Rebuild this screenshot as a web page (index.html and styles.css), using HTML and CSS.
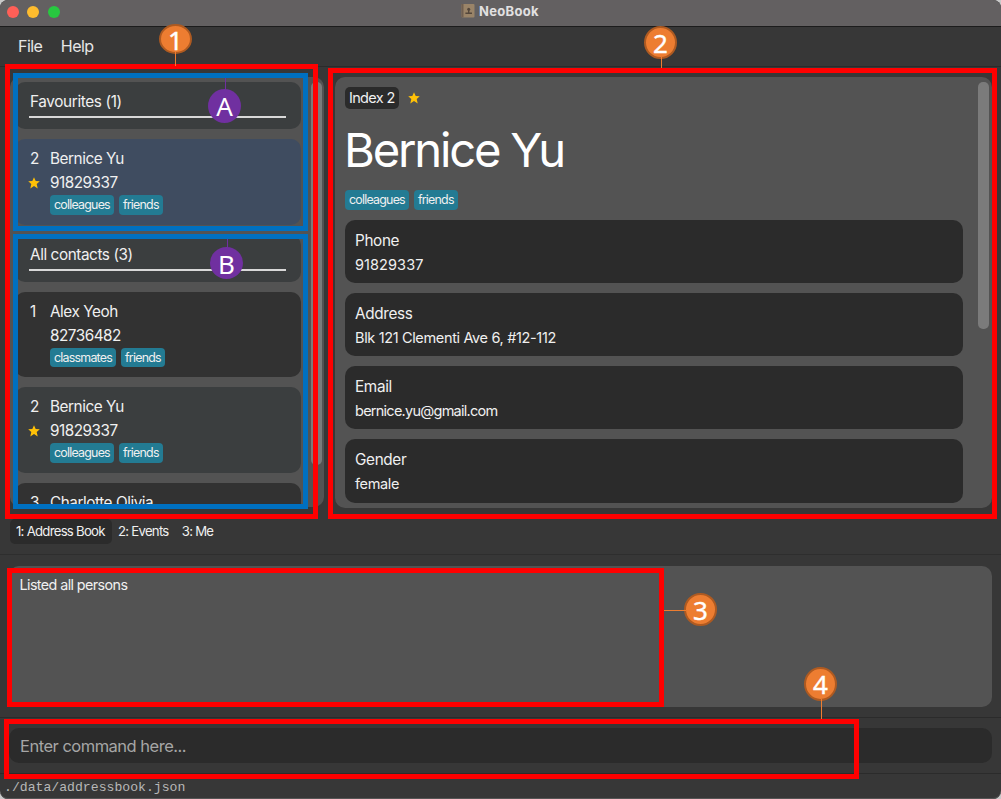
FILE: index.html
```html
<!DOCTYPE html>
<html lang="en">
<head>
<meta charset="utf-8">
<title>NeoBook</title>
<link rel="stylesheet" href="styles.css">
</head>
<body>
<svg width="0" height="0" class="defs">
  <symbol id="star" viewBox="0 0 12 12"><path fill="#ffc107" d="M6 0.2 7.7 3.9 11.8 4.3 8.7 7 9.7 11.4 6 9.1 2.3 11.4 3.3 7 0.2 4.3 4.3 3.9Z"/></symbol>
</svg>
<div class="window">
  <header class="titlebar">
    <div class="lights"><i class="red"></i><i class="yellow"></i><i class="green"></i></div>
    <div class="title">
      <svg width="14" height="14" viewBox="0 0 14 14"><rect x="0.5" width="13" height="13.4" rx="1" fill="#9a8468"/><rect x="0.5" width="2" height="13.4" fill="#705f50"/><circle cx="7.7" cy="5.2" r="1.5" fill="#54473b"/><path d="M7 6h1.4v2.5h2.6V10H4.4V8.5H7Z" fill="#54473b"/></svg>
      <span>NeoBook</span>
    </div>
  </header>
  <nav class="menu"><span>File</span><span>Help</span></nav>
  <main class="main">
    <section class="list">
      <div class="cards">
        <div class="group"><span class="label">Favourites (1)</span></div>
        <article class="card selected">
          <span class="idx">2</span><span class="name">Bernice Yu</span>
          <svg class="star"><use href="#star"/></svg><span class="phone">91829337</span>
          <div class="tags"><span class="tag">colleagues</span><span class="tag">friends</span></div>
        </article>
        <div class="group"><span class="label all">All contacts (3)</span></div>
        <article class="card">
          <span class="idx">1</span><span class="name">Alex Yeoh</span>
          <span class="phone">82736482</span>
          <div class="tags"><span class="tag">classmates</span><span class="tag">friends</span></div>
        </article>
        <article class="card even">
          <span class="idx">2</span><span class="name">Bernice Yu</span>
          <svg class="star"><use href="#star"/></svg><span class="phone">91829337</span>
          <div class="tags"><span class="tag">colleagues</span><span class="tag">friends</span></div>
        </article>
        <article class="card">
          <span class="idx">3</span><span class="name">Charlotte Olivia</span>
        </article>
      </div>
      <div class="thumb list-thumb"></div>
    </section>
    <section class="detail">
      <div class="info">
        <div class="index-row"><span class="index">Index 2</span><svg class="star"><use href="#star"/></svg></div>
        <h1>Bernice Yu</h1>
        <div class="tags"><span class="tag">colleagues</span><span class="tag">friends</span></div>
        <div class="fields">
          <div class="field"><span class="key">Phone</span><span class="val digits">91829337</span></div>
          <div class="field"><span class="key">Address</span><span class="val">Blk 121 Clementi Ave 6, #12-112</span></div>
          <div class="field"><span class="key">Email</span><span class="val email">bernice.yu@gmail.com</span></div>
          <div class="field"><span class="key">Gender</span><span class="val">female</span></div>
        </div>
      </div>
      <div class="thumb detail-thumb"></div>
    </section>
  </main>
  <nav class="tabs"><span class="tab active">1: Address Book</span><span class="tab">2: Events</span><span class="tab">3: Me</span></nav>
  <section class="result"><div class="output">Listed all persons</div></section>
  <section class="command"><div class="input">Enter command here...</div></section>
  <footer class="status">./data/addressbook.json</footer>
</div>

<div class="frame f1"></div>
<div class="frame f2"></div>
<div class="frame f3"></div>
<div class="frame f4"></div>
<div class="frame fa"></div>
<div class="frame fb"></div>
<div class="badge b1">1</div>
<div class="badge b2">2</div>
<div class="badge b3">3</div>
<div class="badge b4">4</div>
<div class="badge ba">A</div>
<div class="badge bb">B</div>
<div class="line l1"></div>
<div class="line l2"></div>
<div class="line l3"></div>
<div class="line l4"></div>
<div class="line la"></div>
<div class="line lb"></div>
</body>
</html>
```
FILE: styles.css
```css
* { box-sizing: border-box; }
body {
  margin: 0;
  width: 1001px;
  height: 799px;
  position: relative;
  overflow: hidden;
  background: #c9c9c9;
  color: #f0f0f0;
  font-family: Inter, "Liberation Sans", sans-serif;
}
.defs { position: absolute; }
.window {
  width: 1001px;
  height: 799px;
  display: flex;
  flex-direction: column;
  background: #373737;
  border-radius: 8px;
  overflow: hidden;
  box-shadow: inset 0 -1px 0 #555;
}

/* Title bar and menu */
.titlebar {
  height: 27px;
  flex: none;
  display: grid;
  grid-template-columns: 1fr auto 1fr;
  padding: 0 8px 0 7px;
  background: #636061;
  border-bottom: 1px solid #1c1c1c;
}
.lights { display: flex; gap: 8.3px; padding-top: 6px; }
.lights i { width: 12px; height: 12px; border-radius: 50%; }
.red { background: #ff5f57; }
.yellow { background: #febc2e; }
.green { background: #28c840; }
.title { display: flex; gap: 4px; font-size: 13px; font-weight: 700; letter-spacing: 0.3px; line-height: 23px; color: #e2e0e1; }
.title svg { margin-top: 4px; }
.menu {
  height: 40px;
  flex: none;
  display: flex;
  gap: 18.5px;
  padding-left: 18px;
  border-bottom: 1px solid #2b2b2b;
  font-size: 16px;
  letter-spacing: -0.55px;
  line-height: 39px;
  color: #e6e6e6;
}

/* Main panes */
.main { height: 441px; flex: none; display: flex; gap: 11px; padding: 10px 9px 0 10px; }
.list, .detail { display: flex; background: #535353; border-radius: 10px; overflow: hidden; }
.list { width: 314px; height: 430px; padding: 5px 2px 0 5px; gap: 10px; }
.detail { width: 657px; height: 431px; padding: 0 3px 0 10px; gap: 15px; }
.cards { width: 286px; display: flex; flex-direction: column; gap: 10px; }
.thumb { flex: none; width: 11px; border-radius: 5px; background: #7b7b7b; }
.list-thumb { height: 383px; }
.detail-thumb { height: 247px; margin-top: 5px; }
.group {
  height: 47px;
  flex: none;
  padding: 9px 15px 0 14px;
  border-radius: 10px;
  background: #3b3e3f;
}
.label {
  display: block;
  height: 27px;
  border-bottom: 2px solid #d8d8d8;
  font-size: 15.3px;
  letter-spacing: -0.36px;
  line-height: 21px;
  padding-left: 1px;
}
.label.all { letter-spacing: -0.42px; }
.card {
  height: 85.7px;
  flex: none;
  display: grid;
  grid-template-columns: 20px 1fr;
  grid-template-rows: 24px 24px 20px;
  padding: 8px 15px 0;
  border-radius: 10px;
  background: #323232;
  font-size: 15.3px;
  line-height: 24px;
}
.card.selected { background: #3f4c60; }
.card.even { background: #3b3e3f; }
.idx { grid-column: 1; }
.name { letter-spacing: -0.45px; }
.phone { grid-column: 2; letter-spacing: -0.5px; }
.star { width: 12px; height: 12px; }
.card .star { align-self: center; margin: 0 0 0 -2px; }
.card .tags { grid-column: 2; }
.tags { display: flex; gap: 5px; }
.tag {
  height: 19.5px;
  padding: 0 4px;
  border-radius: 4px;
  background: #237b93;
  font-size: 12.4px;
  letter-spacing: -0.76px;
  line-height: 20px;
}

/* Contact details */
.info { width: 618px; padding-top: 10px; }
.index-row { display: flex; align-items: center; gap: 9.5px; height: 22px; }
.index {
  height: 22px;
  padding: 0 4px;
  border-radius: 5px;
  background: #2b2b2b;
  font-size: 14.5px;
  letter-spacing: -0.68px;
  line-height: 22px;
}
h1 {
  margin: 11px 0 0 -1px;
  font-size: 47.2px;
  font-weight: 400;
  letter-spacing: -2.2px;
  line-height: 60px;
  height: 70px;
  color: #fff;
}
.info .tags { height: 20px; }
.fields { display: flex; flex-direction: column; gap: 10px; padding-top: 9.5px; }
.field {
  height: 63.3px;
  flex: none;
  display: flex;
  flex-direction: column;
  padding: 9px 10px 0;
  border-radius: 10px;
  background: #2b2b2b;
  line-height: 24px;
}
.key { font-size: 15.3px; letter-spacing: -0.35px; }
.val { font-size: 14.5px; letter-spacing: -0.35px; }
.val.digits { letter-spacing: 0.08px; }
.val.email { letter-spacing: -0.75px; }

/* Tabs, output, command and status */
.tabs {
  height: 47px;
  flex: none;
  display: flex;
  padding: 11px 0 0 10px;
  border-bottom: 1px solid #2e2e2e;
  font-size: 13.2px;
  letter-spacing: -0.74px;
}
.tab { height: 25px; padding: 0 7.2px 0 6px; border-radius: 5px; line-height: 24px; }
.tab.active { background: #2b2b2b; }
.result { height: 163px; flex: none; padding: 11px 9px 10px; border-bottom: 1px solid #2b2b2b; }
.output {
  height: 141px;
  padding: 9px 10.5px;
  border-radius: 10px;
  background: #535353;
  font-size: 14.3px;
  letter-spacing: -0.58px;
  line-height: 20px;
}
.command { height: 56px; flex: none; padding: 10px 9px; border-bottom: 1px solid #2b2b2b; }
.input {
  height: 35px;
  padding-left: 11px;
  border-radius: 10px;
  background: #2b2b2b;
  color: #a6a6a6;
  font-size: 16.5px;
  letter-spacing: -0.5px;
  line-height: 36px;
}
.status {
  padding-left: 4px;
  font-family: "Liberation Mono", monospace;
  font-size: 13.15px;
  line-height: 27px;
  color: #b8b8b8;
}

/* Annotation overlay */
.frame, .line, .badge { position: absolute; }
.frame { border: 5px solid #f00; }
.f1 { left: 5px; top: 64px; width: 313px; height: 455px; }
.f2 { left: 328px; top: 68px; width: 669px; height: 451px; }
.f3 { left: 7px; top: 568px; width: 657px; height: 139px; }
.f4 { left: 4px; top: 719px; width: 855px; height: 60px; }
.fa, .fb { left: 13px; width: 295px; border-color: #0070c0; }
.fa { top: 73px; height: 158px; }
.fb { top: 234px; height: 275px; }
.line { width: 1px; background: #ed7d31; }
.l1 { left: 175px; top: 52px; height: 14px; }
.l2 { left: 661px; top: 57px; height: 11px; }
.l3 { left: 664px; top: 610px; width: 22px; height: 1px; }
.l4 { left: 821px; top: 699px; height: 20px; }
.la { left: 225px; top: 78px; height: 14px; background: #7030a0; }
.lb { left: 227px; top: 239px; height: 12px; background: #7030a0; }
.badge {
  width: 33px;
  height: 33px;
  display: flex;
  align-items: center;
  justify-content: center;
  border: 2px solid #ae5a21;
  border-radius: 50%;
  background: #ed7d31;
  color: #fff;
  font-family: "Noto Sans", sans-serif;
  font-size: 26px;
  line-height: 30px;
  -webkit-text-stroke: 0.4px #fff;
}
.b1 { left: 159px; top: 24px; height: 30px; padding-top: 2px; }
.b2 { left: 644px; top: 26px; }
.b3 { left: 684px; top: 593px; }
.b4 { left: 804px; top: 667px; height: 34px; }
.ba, .bb { border: 0; background: #7030a0; -webkit-text-stroke: 0; }
.ba { left: 208px; top: 89px; height: 34px; }
.bb { left: 210px; top: 247px; height: 32px; padding-top: 2px; }
```
